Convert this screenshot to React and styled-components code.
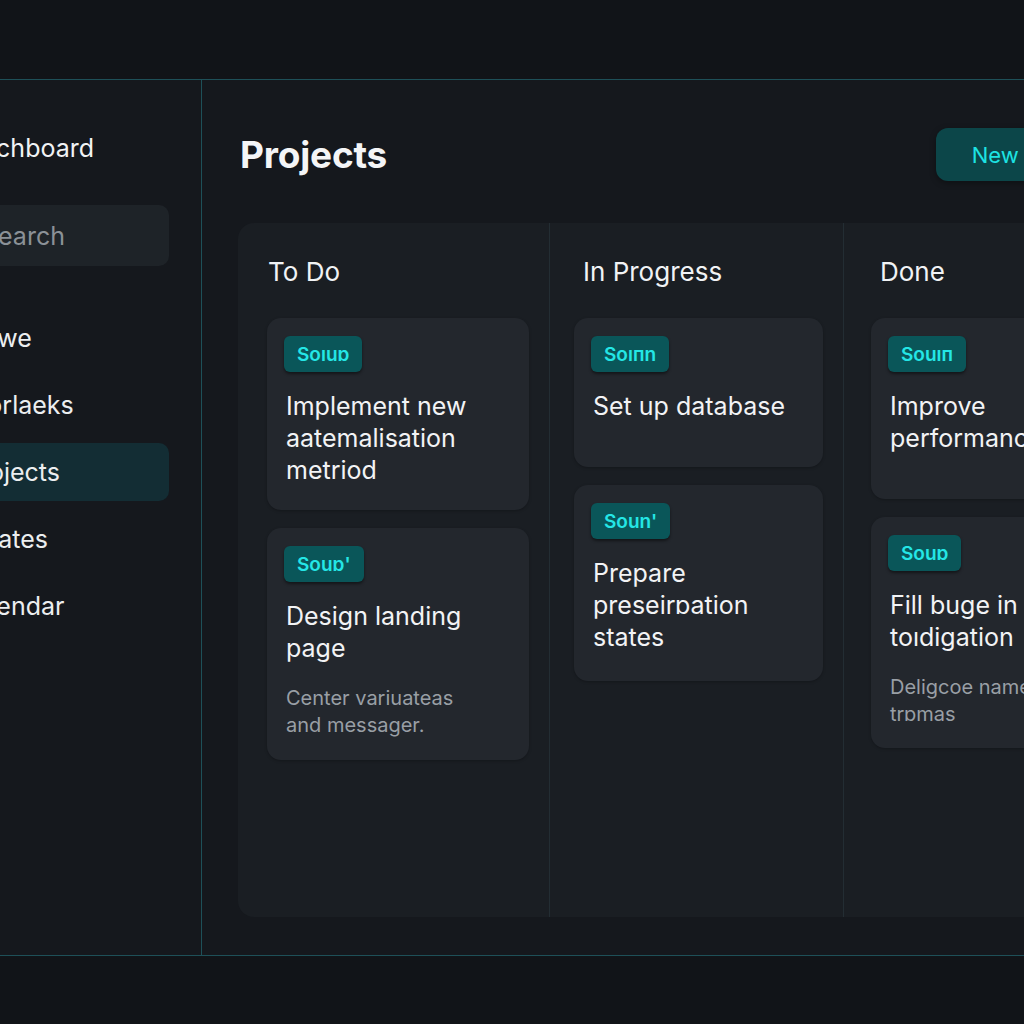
import React from "react";
import styled, { createGlobalStyle } from "styled-components";

const GlobalStyle = createGlobalStyle`
  html, body {
    margin: 0;
    padding: 0;
    background: #111418;
    overflow: hidden;
  }
  body {
    font-family: Inter, "Noto Sans", "Liberation Sans", sans-serif;
    color: #eef0f2;
  }
`;

const Page = styled.div`
  width: 100vw;
  height: 100vh;
  overflow: hidden;
  padding-top: 79px;
  box-sizing: border-box;
  background: #111418;
`;

const Frame = styled.div`
  display: flex;
  width: 1248px;
  height: 877px;
  margin-left: -78px;
  box-sizing: border-box;
  border-top: 1px solid #1e5058;
  border-bottom: 1px solid #1e5058;
  background: #15181d;
`;

const Sidebar = styled.aside`
  width: 280px;
  flex-shrink: 0;
  box-sizing: border-box;
  padding: 52px 32px 0 24px;
  border-right: 1px solid #1e5058;
  display: flex;
  flex-direction: column;
`;

const Brand = styled.div`
  font-size: 25px;
  line-height: 32px;
  padding-left: 18px;
  color: #f1f3f5;
`;

const SearchBox = styled.div`
  margin-top: 41px;
  height: 61px;
  border-radius: 10px;
  background: #1e2328;
  display: flex;
  align-items: center;
  padding-left: 36px;
  font-size: 25px;
  color: #8b9197;
`;

const Nav = styled.nav`
  margin-top: 43px;
  display: flex;
  flex-direction: column;
  gap: 9px;
`;

const NavItem = styled.div`
  height: 58px;
  border-radius: 10px;
  display: flex;
  align-items: center;
  padding-left: 18px;
  font-size: 25px;
  color: #eceef0;
  background: ${(p) => (p.$active ? "#132d34" : "transparent")};
`;

const Main = styled.main`
  flex: 1;
  box-sizing: border-box;
  padding: 48px 36px 38px 36px;
  display: flex;
  flex-direction: column;
`;

const Header = styled.div`
  display: flex;
  align-items: center;
  justify-content: space-between;
  height: 53px;
`;

const Title = styled.h1`
  margin: 0 0 0 2px;
  font-size: 37px;
  font-weight: 700;
  color: #f4f5f7;
  letter-spacing: -0.2px;
`;

const NewButton = styled.button`
  height: 53px;
  padding: 0 36px;
  border: none;
  border-radius: 12px;
  background: #0c4649;
  color: #1de3e3;
  font-family: inherit;
  font-size: 22px;
  box-shadow: 0 2px 6px rgba(0, 0, 0, 0.35);
`;

const Board = styled.section`
  margin-top: 42px;
  flex: 1;
  border-radius: 16px;
  background: #1a1e23;
  display: grid;
  grid-template-columns: 311px 294px 1fr;
  overflow: hidden;
`;

const Column = styled.div`
  padding: 33px 20px 0 ${(p) => p.$inset}px;
  border-left: ${(p) => (p.$first ? "none" : "1px solid #232d33")};
  display: flex;
  flex-direction: column;
  gap: 18px;
`;

const ColumnTitle = styled.h2`
  margin: 0 0 12px ${(p) => p.$indent}px;
  font-size: 26px;
  line-height: 32px;
  font-weight: 400;
  color: #f1f3f5;
`;

const Card = styled.div`
  min-height: ${(p) => p.$h}px;
  box-sizing: border-box;
  padding: 18px 30px 20px 17px;
  border-radius: 14px;
  background: #23272d;
  box-shadow: 0 1px 3px rgba(0, 0, 0, 0.25);
`;

const Tag = styled.span`
  display: inline-flex;
  align-items: center;
  height: 36px;
  padding: 0 13px;
  border-radius: 6px;
  background: #0a5659;
  color: #24e6e6;
  font-size: 19px;
  font-weight: 600;
  box-shadow: 0 2px 3px rgba(0, 0, 0, 0.45);
`;

const CardTitle = styled.div`
  margin-top: 18px;
  padding-left: 2px;
  font-size: 25px;
  line-height: 32px;
  color: #f2f3f5;
`;

const CardText = styled.div`
  margin-top: 21px;
  padding: 0 24px 0 2px;
  font-size: 20px;
  line-height: 27px;
  color: #999fa5;
`;

const columns = [
  {
    name: "To Do",
    inset: 29,
    indent: 1,
    cards: [
      { tag: "Soıuɒ", title: "Implement new aatemalisation metriod", h: 192 },
      {
        tag: "Souɒ'",
        title: "Design landing page",
        text: "Center variuateas and messager.",
        h: 232,
      },
    ],
  },
  {
    name: "In Progress",
    inset: 24,
    indent: 9,
    cards: [
      { tag: "Soıпn", title: "Set up database", h: 149 },
      { tag: "Soun'", title: "Prepare preseirɒation states", h: 196 },
    ],
  },
  {
    name: "Done",
    inset: 27,
    indent: 9,
    cards: [
      { tag: "Souıп", title: "Improve performance", h: 181 },
      {
        tag: "Souɒ",
        title: "Fill buge in toıdigation",
        text: "Deligcoe name trɒmas",
        h: 229,
      },
    ],
  },
];

const navItems = ["Ovwe", "Worlaeks", "Projects", "Upates", "Caendar"];

export default function App() {
  return (
    <>
      <GlobalStyle />
      <Page>
        <Frame>
          <Sidebar>
            <Brand>Dachboard</Brand>
            <SearchBox>Search</SearchBox>
            <Nav>
              {navItems.map((item) => (
                <NavItem key={item} $active={item === "Projects"}>
                  {item}
                </NavItem>
              ))}
            </Nav>
          </Sidebar>
          <Main>
            <Header>
              <Title>Projects</Title>
              <NewButton>New Project</NewButton>
            </Header>
            <Board>
              {columns.map((col, i) => (
                <Column key={col.name} $first={i === 0} $inset={col.inset}>
                  <ColumnTitle $indent={col.indent}>{col.name}</ColumnTitle>
                  {col.cards.map((card) => (
                    <Card key={card.title} $h={card.h}>
                      <Tag>{card.tag}</Tag>
                      <CardTitle>{card.title}</CardTitle>
                      {card.text && <CardText>{card.text}</CardText>}
                    </Card>
                  ))}
                </Column>
              ))}
            </Board>
          </Main>
        </Frame>
      </Page>
    </>
  );
}
